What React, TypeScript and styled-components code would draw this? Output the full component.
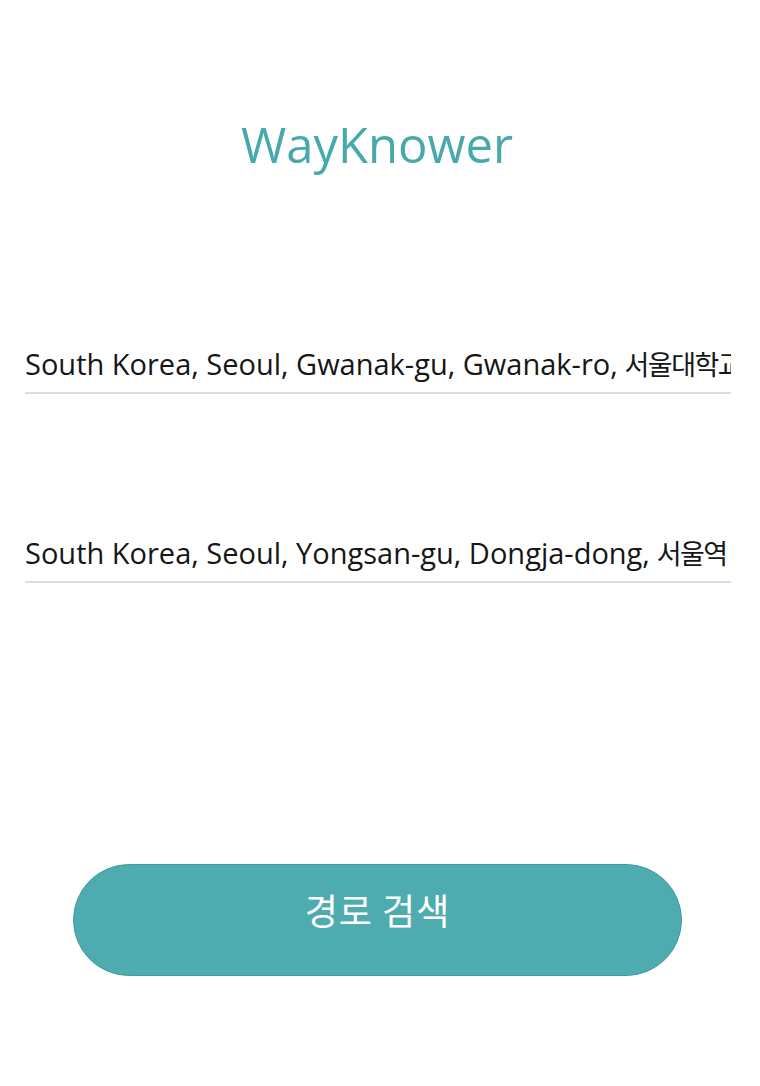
import React from "react";
import styled, { createGlobalStyle } from "styled-components";

const GlobalStyle = createGlobalStyle`
  html, body {
    margin: 0;
    padding: 0;
    background: #ffffff;
  }
  body {
    font-family: "Open Sans", "Noto Sans CJK KR", sans-serif;
  }
`;

const Screen = styled.div`
  width: 760px;
  height: 1086px;
  display: flex;
  flex-direction: column;
  background: #ffffff;
  overflow: hidden;
`;

const Title = styled.h1`
  margin: 112px 0 0;
  padding-right: 6px;
  text-align: center;
  font-family: "Open Sans", sans-serif;
  font-weight: 400;
  font-size: 49px;
  line-height: 64px;
  color: #47a9ac;
`;

const Field = styled.div<{ $top: number }>`
  margin: ${(p) => p.$top}px 29px 0 25px;
  border-bottom: 2px solid #dcdcdc;
`;

const FieldText = styled.div`
  height: 54px;
  box-sizing: border-box;
  padding: 0 0 4px;
  display: flex;
  align-items: center;
  white-space: nowrap;
  overflow: hidden;
  font-family: "Open Sans", "Noto Sans CJK KR", sans-serif;
  font-size: 29px;
  color: #161616;
`;

const Hangul = styled.span`
  font-family: "Noto Sans CJK KR", sans-serif;
  font-size: 27px;
  letter-spacing: -1.5px;
  margin-left: 0.25em;
`;

const ButtonRow = styled.div`
  margin-top: auto;
  margin-bottom: 110px;
  display: flex;
  padding: 0 78px 0 73px;
`;

const SearchButton = styled.button`
  width: 609px;
  height: 112px;
  box-sizing: border-box;
  border-radius: 56px;
  border: 1px solid #3a9fa1;
  background: #4eacb0;
  color: #ffffff;
  font-family: "Noto Sans CJK KR", sans-serif;
  font-size: 36px;
  letter-spacing: 1px;
  font-weight: 400;
  padding: 0 0 22px;
  cursor: pointer;
`;

const fields = [
  { top: 162, latin: "South Korea, Seoul, Gwanak-gu, Gwanak-ro,", hangul: "서울대학교" },
  { top: 133, latin: "South Korea, Seoul, Yongsan-gu, Dongja-dong,", hangul: "서울역" },
];

export default function App() {
  return (
    <>
      <GlobalStyle />
      <Screen>
        <Title>WayKnower</Title>
        {fields.map((f) => (
          <Field key={f.hangul} $top={f.top}>
            <FieldText>
              {f.latin}
              <Hangul>{f.hangul}</Hangul>
            </FieldText>
          </Field>
        ))}
        <ButtonRow>
          <SearchButton>경로 검색</SearchButton>
        </ButtonRow>
      </Screen>
    </>
  );
}
